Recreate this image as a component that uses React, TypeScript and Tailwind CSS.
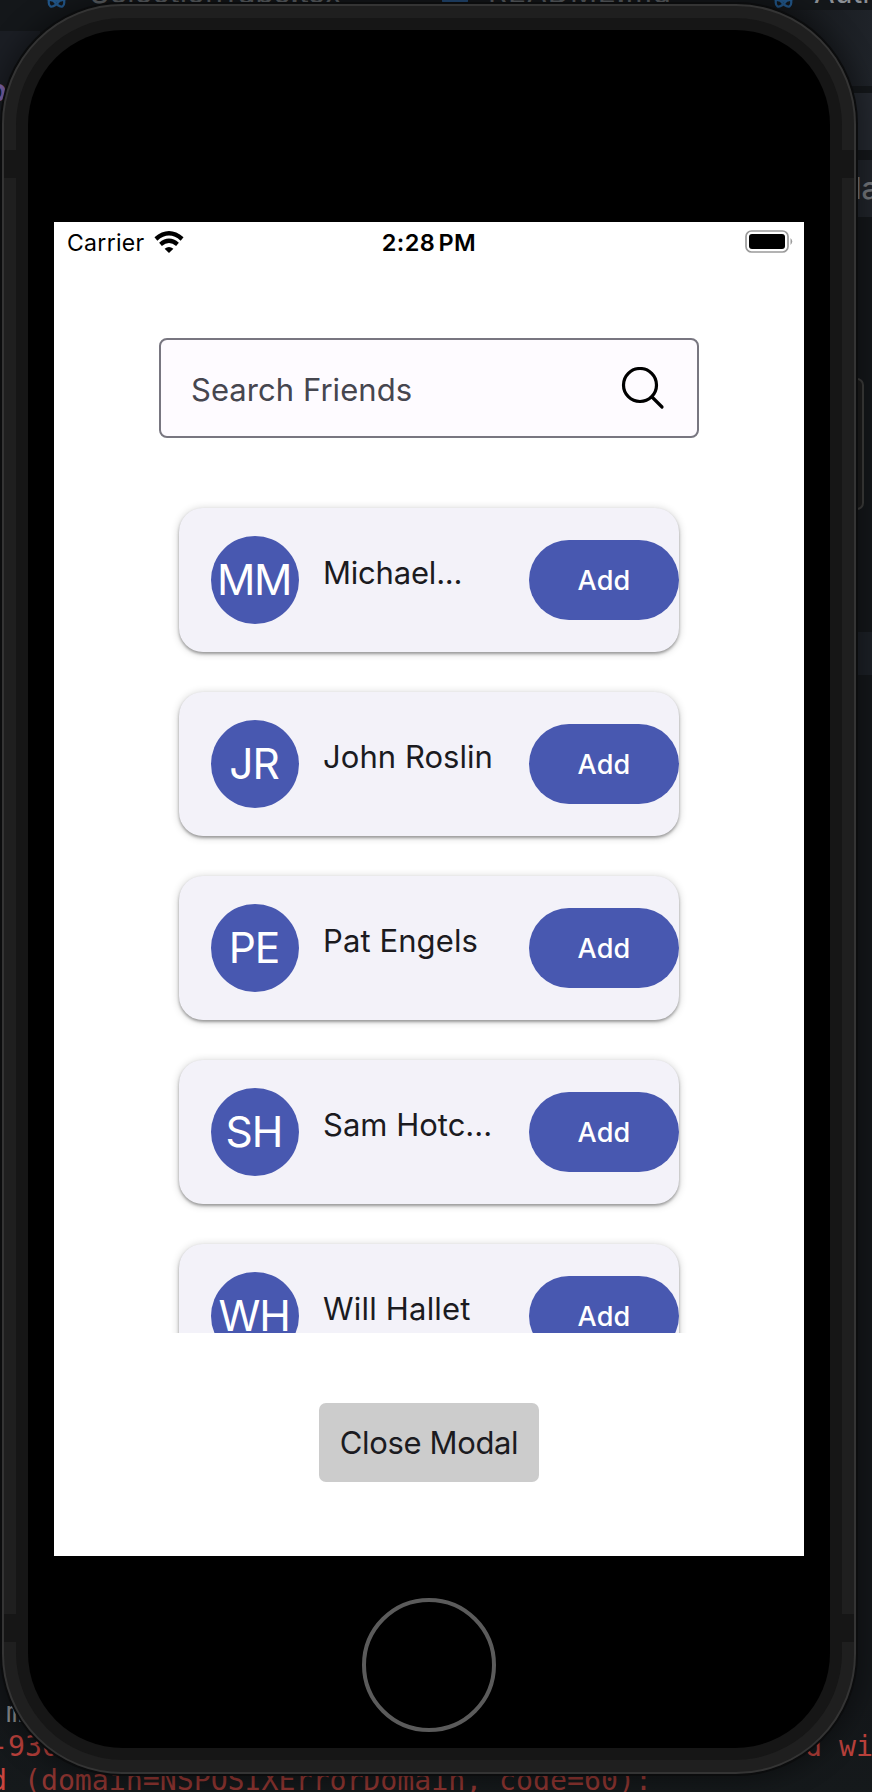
import React from "react";

const friends = [
  { initials: "MM", name: "Michael...", nameClass: "tracking-[-0.2px]", initialsClass: "tracking-[-1.5px]" },
  { initials: "JR", name: "John Roslin", nameClass: "tracking-[0.05px]", initialsClass: "tracking-[-1px]" },
  { initials: "PE", name: "Pat Engels", nameClass: "tracking-[0.1px]", initialsClass: "tracking-[-1px]" },
  { initials: "SH", name: "Sam Hotc...", nameClass: "tracking-[0px]", initialsClass: "tracking-[-1px]" },
  { initials: "WH", name: "Will Hallet", nameClass: "tracking-[0.2px]", initialsClass: "tracking-[-1.2px]" },
];

function ReactMark() {
  return (
    <svg className="mt-[6px] size-[27px] shrink-0" viewBox="0 0 24 24" fill="none" stroke="#22578a" strokeWidth="2">
      <ellipse cx="12" cy="12" rx="11" ry="4.8" />
      <ellipse cx="12" cy="12" rx="11" ry="4.8" transform="rotate(60 12 12)" />
      <ellipse cx="12" cy="12" rx="11" ry="4.8" transform="rotate(120 12 12)" />
    </svg>
  );
}

function EditorTabs() {
  return (
    <div className="-mt-[26px] flex h-[36px] text-[30px] leading-[36px] whitespace-nowrap text-[#5c6064]">
      <div className="flex w-[399px] shrink-0 items-center gap-[20px] pl-[43px]">
        <ReactMark />
        <span className="tracking-[0.2px]">SelectionTabs.tsx</span>
      </div>
      <div className="flex w-[328px] shrink-0 items-center gap-[20px] pl-[43px]">
        <span className="mt-[5px] size-[26px] rounded-[7px] bg-[#234a76]" />
        <span className="tracking-[0.6px]">README.md</span>
      </div>
      <div className="flex items-center gap-[17px] pl-[43px] text-[#8b8f94]">
        <ReactMark />
        <span>Auth</span>
      </div>
    </div>
  );
}

function EditorBackdrop() {
  return (
    <div className="absolute inset-0 flex flex-col overflow-hidden bg-[#14171a] font-['Inter',sans-serif]">
      <EditorTabs />
      <div className="flex flex-1 justify-between">
        <div className="flex w-[40px] flex-col pt-[21px]">
          <div className="flex h-[110px] items-center bg-[#1b1e24] pt-[9px]">
            <span className="-ml-[11px] font-['DejaVu_Sans_Mono',monospace] text-[30px] font-bold text-[#8268b0]">o</span>
          </div>
          <div className="mt-[74px] h-px bg-[#34435c]" />
          <div className="mt-[162px] h-px bg-[#2b2e32]" />
          <div className="mt-[129px] h-px bg-[#2b2e32]" />
          <div className="mt-[31px] h-px bg-[#2b2e32]" />
          <div className="mt-[129px] h-px bg-[#2b2e32]" />
          <div className="mt-[280px] -ml-[18px] size-[20px] rounded-full bg-[#5d5f61]" />
        </div>
        <div className="flex w-[130px] flex-col items-end">
          <div className="h-[76px] w-full bg-linear-to-r from-[#111315] to-[#1f2329]" />
          <div className="mt-[7px] h-[57px] w-[30px] bg-[#24282f]" />
          <div className="mt-[10px] flex h-[57px] w-[30px] items-center bg-[#20242a] pl-[12px] text-[30px] font-medium text-[#74777c]">la</div>
          <div className="mt-[415px] h-[43px] w-[16px] bg-[#1c2026]" />
        </div>
      </div>
      <div className="-mb-[6px] flex flex-col bg-linear-to-b from-[#14171a] to-[#15191b] font-['DejaVu_Sans_Mono',monospace] text-[28.2px] leading-[34px] whitespace-pre text-[#b8403b]">
        <div className="pl-[6px] text-[#8d8f91]">m</div>
        <div className="-ml-[9px] flex justify-between">
          <span>-930</span>
          <span className="w-[67px]">d wi</span>
        </div>
        <div className="-ml-[10px] text-[#8e3531]">
          <span className="text-[#c9453f]">d </span>(domain=NSPOSIXErrorDomain, code=60):
        </div>
      </div>
    </div>
  );
}

function StatusBar() {
  return (
    <div className="flex h-[40px] w-full shrink-0 items-center px-[13px] pt-[2px] text-black">
      <div className="flex flex-1 items-center gap-[9px]">
        <span className="text-[23px] tracking-[0.3px]">Carrier</span>
        <svg className="mb-[2px] h-[22px] w-[30px]" viewBox="0 0 30 22">
          <path d="M1.9 8Q15 -3.4 28.1 8" fill="none" stroke="#000" strokeWidth="4.4" />
          <path d="M6.5 13.4Q15 6.2 23.5 13.4" fill="none" stroke="#000" strokeWidth="4.2" />
          <path d="M15 22 10.6 17.8Q15 14 19.4 17.8Z" />
        </svg>
      </div>
      <span className="text-[23.5px] font-semibold tracking-[0.4px] [word-spacing:-3px]">2:28 PM</span>
      <div className="flex flex-1 justify-end">
        <svg className="-mr-[2px] mb-[2px] h-[24px] w-[48px]" viewBox="0 0 48 24">
          <rect x="1" y="1" width="42" height="21" rx="5.5" fill="none" stroke="#9b9b9b" strokeWidth="1.7" />
          <rect x="4" y="4" width="36" height="15" rx="3" />
          <path d="M45.5 8Q49 11.5 45.5 15Z" fill="#9b9b9b" />
        </svg>
      </div>
    </div>
  );
}

type FriendCardProps = { initials: string; name: string; nameClass: string; initialsClass: string };

function FriendCard({ initials, name, nameClass, initialsClass }: FriendCardProps) {
  return (
    <div className="flex h-[144px] w-[500px] shrink-0 items-center rounded-[24px] bg-[#f3f2f9] pl-[32px] shadow-[0_2px_3px_rgba(0,0,0,0.32),0_1px_9px_rgba(0,0,0,0.2)]">
      <div className={`flex size-[88px] shrink-0 items-center justify-center rounded-full bg-[#4858b0] pr-[2px] text-[42.5px] leading-none text-white ${initialsClass}`}>
        {initials}
      </div>
      <div className={`mb-[14px] ml-[24px] flex-1 text-[31px] leading-[48px] whitespace-nowrap text-[#1b1b1f] ${nameClass}`}>{name}</div>
      <button className="h-[80px] w-[150px] shrink-0 rounded-full bg-[#4858b0] pt-[2px] text-[27px] font-medium tracking-[0.2px] text-white">Add</button>
    </div>
  );
}

function Screen() {
  return (
    <div className="flex h-[1334px] w-[750px] shrink-0 flex-col items-center bg-white">
      <StatusBar />
      <div className="mt-[76px] flex h-[100px] w-[540px] shrink-0 items-center justify-between rounded-[8px] border-2 border-[#787680] bg-[#fefbff] pt-[4px] pr-[32px] pl-[30px]">
        <span className="text-[31px] tracking-[0.05px] text-[#46464f]">Search Friends</span>
        <svg className="mb-[3px] h-[44px] w-[44px]" viewBox="0 0 44 44" fill="none" stroke="#000" strokeWidth="3.2" strokeLinecap="round">
          <circle cx="19" cy="18" r="16.5" />
          <path d="m31 30 10 10" />
        </svg>
      </div>
      <div className="flex h-[895px] w-[540px] shrink-0 flex-col items-center gap-[40px] overflow-hidden pt-[70px]">
        {friends.map((f) => (
          <FriendCard key={f.initials} {...f} />
        ))}
      </div>
      <button className="mt-[70px] h-[79px] w-[220px] shrink-0 rounded-[7px] bg-[#cccccc] pt-[2px] text-[31px] tracking-[-0.35px] whitespace-nowrap text-[#1b1b1f]">Close Modal</button>
    </div>
  );
}

export default function App() {
  return (
    <div className="relative h-[1792px] w-[872px] overflow-hidden bg-[#14171a] pt-[4px] pl-[2px] font-['Inter',sans-serif]">
      <EditorBackdrop />
      <div className="absolute top-[378px] right-[8px] h-[132px] w-[14px] rounded-r-[7px] border-2 border-[#3d3d3c] bg-[#1c1c1c]" />
      <div className="relative h-[1770px] w-[854px] rounded-[120px] border-2 border-[#343434] bg-[#1f1f1f] shadow-[0_0_0_2px_#0b0c0d,0_0_24px_8px_rgba(0,0,0,0.35)]">
        <div className="absolute inset-0 flex flex-col justify-between pt-[144px] pb-[130px]">
          <div className="h-[28px] bg-[#161616]" />
          <div className="h-[28px] bg-[#161616]" />
        </div>
        <div className="relative h-full w-full p-[12px]">
          <div className="h-full w-full rounded-[107px] bg-[#161616] p-[12px]">
            <div className="flex h-full w-full flex-col items-center rounded-[95px] bg-black pt-[192px]">
              <Screen />
              <div className="mt-[42px] size-[134px] shrink-0 rounded-full border-4 border-[#5b5b5b]" />
            </div>
          </div>
        </div>
      </div>
    </div>
  );
}
